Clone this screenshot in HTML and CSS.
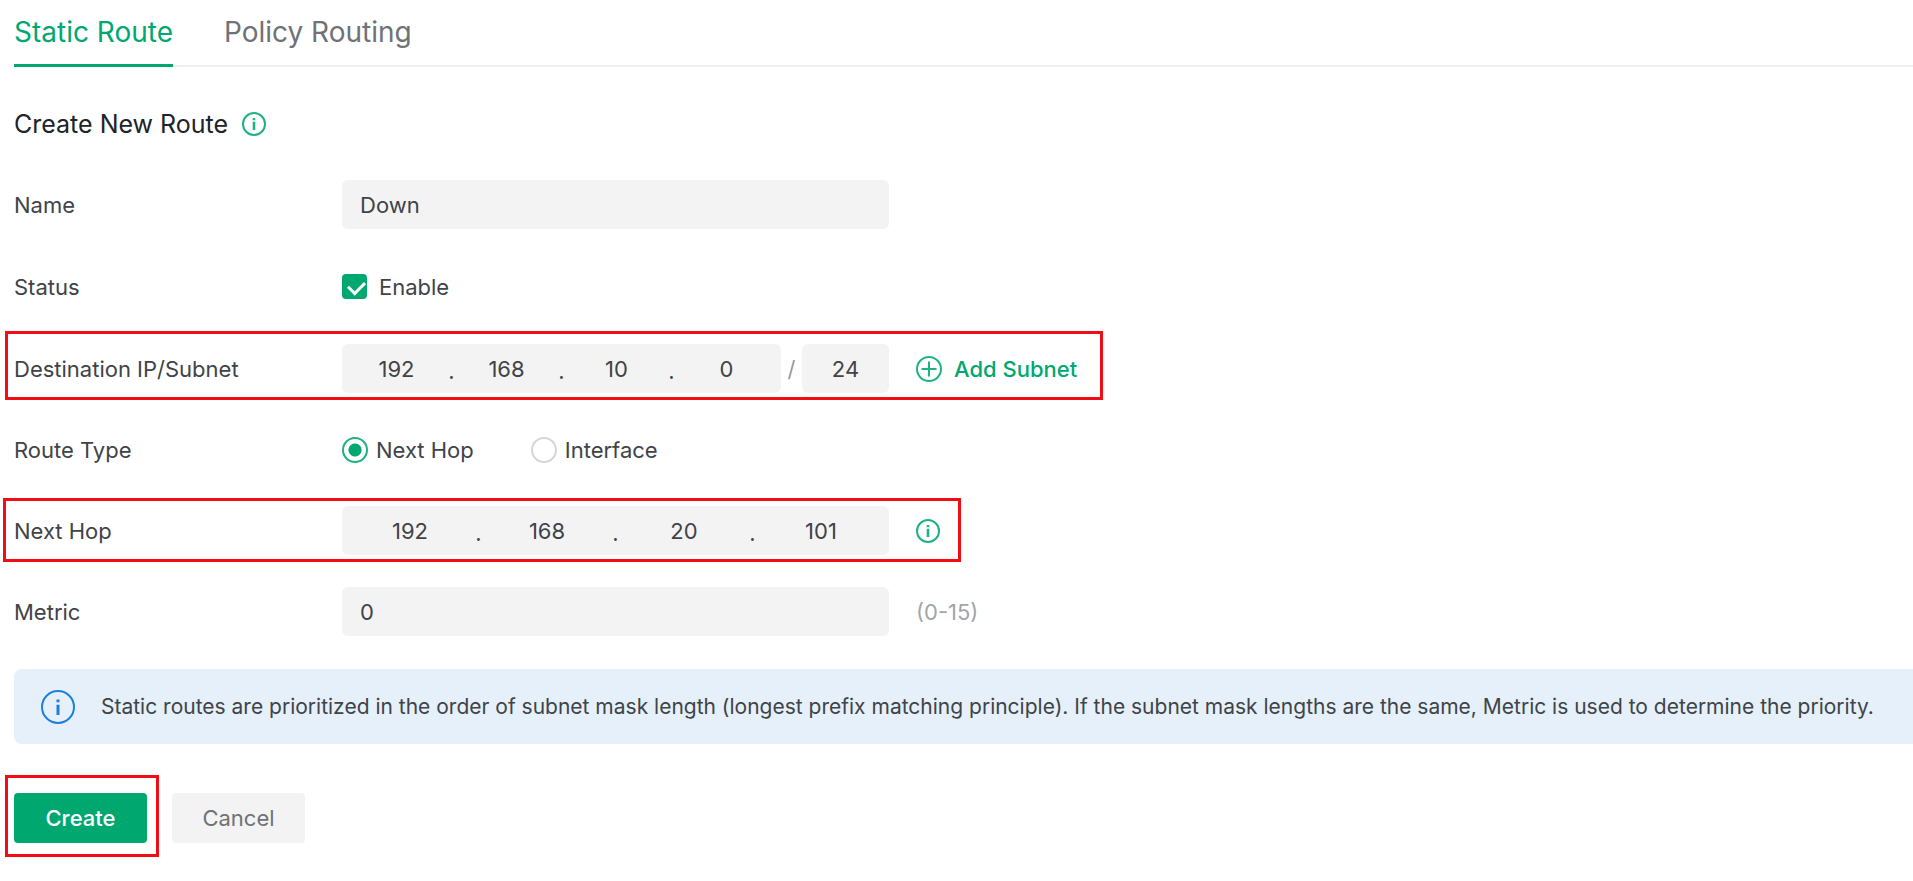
FILE: index.html
```html
<!DOCTYPE html>
<html lang="en">
<head>
  <meta charset="UTF-8">
  <title>Static Route</title>
  <meta name="viewport" content="width=device-width, initial-scale=1.0">
  <link rel="stylesheet" href="styles.css">
</head>
<body>

<nav class="tabs">
  <a class="tab active" href="#static">Static Route</a>
  <a class="tab" href="#policy">Policy Routing</a>
</nav>

<form class="route-form">
  <h1>Create New Route
    <svg class="icon-info" viewBox="0 0 24 24"><circle cx="12" cy="12" r="11"/><path class="fill" d="M10.7 6h2.6v2.2h-2.6zM10.7 9.8h2.6V18h-2.6z"/></svg>
  </h1>

  <div class="row">
    <label class="label" for="name">Name</label>
    <input class="field" type="text" id="name" value="Down">
  </div>

  <div class="row row-check">
    <span class="label">Status</span>
    <label class="option check"><input type="checkbox" checked>Enable</label>
  </div>

  <div class="row highlight highlight-dest">
    <span class="label" id="destLabel">Destination IP/Subnet</span>
    <div class="subnet">
      <div class="ip" role="group" aria-labelledby="destLabel">
        <input type="text" value="192" aria-label="Destination octet 1"><span>.</span>
        <input type="text" value="168" aria-label="Destination octet 2"><span>.</span>
        <input type="text" value="10" aria-label="Destination octet 3"><span>.</span>
        <input type="text" value="0" aria-label="Destination octet 4">
      </div>
      <span class="slash">/</span>
      <input class="mask" type="text" value="24" aria-label="Subnet mask length">
    </div>
    <button class="add" type="button">
      <svg class="icon-add" viewBox="0 0 26 26"><circle cx="13" cy="13" r="12"/><path d="M13 5.5v15M5.5 13h15"/></svg>
      Add Subnet
    </button>
  </div>

  <div class="row">
    <span class="label">Route Type</span>
    <div class="options">
      <label class="option"><input type="radio" name="type" checked>Next Hop</label>
      <label class="option"><input type="radio" name="type">Interface</label>
    </div>
  </div>

  <div class="row highlight highlight-hop">
    <span class="label" id="hopLabel">Next Hop</span>
    <div class="ip" role="group" aria-labelledby="hopLabel">
      <input type="text" value="192" aria-label="Next hop octet 1"><span>.</span>
      <input type="text" value="168" aria-label="Next hop octet 2"><span>.</span>
      <input type="text" value="20" aria-label="Next hop octet 3"><span>.</span>
      <input type="text" value="101" aria-label="Next hop octet 4">
    </div>
    <svg class="icon-info" viewBox="0 0 24 24"><circle cx="12" cy="12" r="11"/><path class="fill" d="M10.7 6h2.6v2.2h-2.6zM10.7 9.8h2.6V18h-2.6z"/></svg>
  </div>

  <div class="row">
    <label class="label" for="metric">Metric</label>
    <input class="field" type="text" id="metric" value="0">
    <span class="hint">(0-15)</span>
  </div>

  <div class="note">
    <svg class="icon-note" viewBox="0 0 34 34"><circle cx="17" cy="17" r="16"/><path class="fill" d="M15.5 9.5h3v2.8h-3zM15.5 14.8h3V25h-3z"/></svg>
    <p>Static routes are prioritized in the order of subnet mask length (longest prefix matching principle). If the subnet mask lengths are the same, Metric is used to determine the priority.</p>
  </div>

  <div class="actions">
    <div class="highlight highlight-create"><button class="btn primary" type="submit">Create</button></div>
    <button class="btn" type="button">Cancel</button>
  </div>
</form>

</body>
</html>
```
FILE: styles.css
```css
* { box-sizing: border-box; }
body { margin: 0; padding: 0 0 24px 14px; background: #fff; color: #404347; font-family: Inter, sans-serif; font-size: 22px; line-height: 30px; }
input, button { font: inherit; color: inherit; border: none; margin: 0; padding: 0; }
button { cursor: pointer; }

.tabs { display: flex; gap: 51px; height: 67px; box-shadow: inset 0 -2px #f0f0f0; }
.tab { padding-top: 14px; font-size: 28px; line-height: 36px; color: #6f7276; text-decoration: none; white-space: nowrap; }
.tab.active { color: #00a870; border-bottom: 3px solid #00a870; }

h1 { display: flex; align-items: center; gap: 14px; height: 32px; margin: 41px 0 40px; font-size: 25px; font-weight: 400; color: #202328; }

svg { flex: none; fill: none; stroke: #1fb281; stroke-width: 2; }
.fill { fill: #1fb281; stroke: none; }
.icon-info { width: 24px; height: 24px; }
.icon-add { width: 26px; height: 26px; }
.icon-note { width: 34px; height: 34px; stroke: #1c7fdc; }
.icon-note .fill { fill: #1c7fdc; }

.row { display: flex; align-items: center; width: fit-content; height: 49px; margin-bottom: 32px; white-space: nowrap; }
.row-check { height: 51px; }
.label { width: 328px; }
.field, .ip, .subnet { width: 547px; height: 49px; }
.field, .ip, .mask { background: #f3f3f3; border-radius: 6px; }
.field { padding: 0 18px; }
.field + *, .ip + svg, .add { margin-left: 27px; }
.subnet { display: flex; align-items: center; }
.ip { display: flex; align-items: center; }
.ip input { flex: 1; min-width: 0; background: none; text-align: center; }
.ip span { display: flex; justify-content: center; width: 1px; padding-top: 4px; }
.subnet .ip { flex: 1; min-width: 0; }
.slash { width: 21px; text-align: center; color: #999; }
.mask { width: 87px; height: 49px; text-align: center; }
.add { display: flex; align-items: center; gap: 12px; background: none; color: #00a870; font-weight: 500; }
.hint { color: #a3a5a7; }

.options { display: flex; gap: 57px; }
.option { display: flex; align-items: center; gap: 8px; }
.option.check { gap: 12px; }
.option input { appearance: none; width: 26px; height: 26px; border: 2px solid #d6d6d6; border-radius: 50%; background: #fff; }
.option input:checked { border-color: #1fb281; background: radial-gradient(circle, #00a870 6px, #fff 7px); }
.option.check input { position: relative; width: 25px; height: 25px; border: none; border-radius: 4px; background: #00a870; }
.option.check input:checked::after { content: ""; position: absolute; left: 9px; top: 4px; width: 8px; height: 13px; border: solid #fff; border-width: 0 3px 3px 0; transform: rotate(45deg); }

.note { display: flex; align-items: center; gap: 26px; min-height: 75px; margin-top: 33px; padding: 0 16px 0 27px; background: #e5f0fa; border-radius: 8px 0 0 8px; font-size: 21px; }
.note p { margin: 0; }

.actions { display: flex; gap: 25px; margin-top: 49px; }
.btn { min-width: 133px; height: 50px; background: #f3f3f3; border-radius: 4px; color: #6f7276; }
.primary { background: #00a870; color: #fff; font-weight: 500; }

/* red frames around the settings to fill in */
.highlight { position: relative; }
.highlight::after { content: ""; position: absolute; border: 3px solid #f20d15; pointer-events: none; }
.highlight-dest::after { inset: -13px -26px -7px -9px; }
.highlight-hop::after { inset: -8px -21px -7px -11px; }
.highlight-create::after { inset: -18px -12px -14px -9px; }
```
